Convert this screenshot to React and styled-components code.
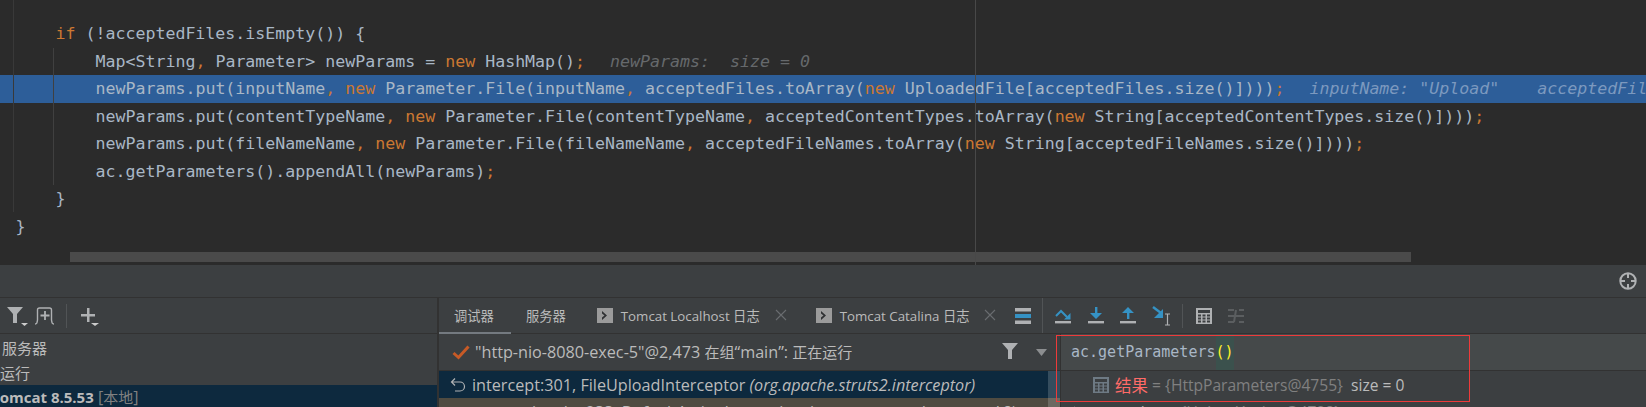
import React from 'react';
import styled, { createGlobalStyle } from 'styled-components';

const Global = createGlobalStyle`
  html, body { margin: 0; padding: 0; background: #3c3f41; overflow: hidden; }
`;

const UI = `"Open Sans", "Noto Sans", "Noto Sans CJK SC", sans-serif`;
const MONO = `"DejaVu Sans Mono", "Liberation Mono", monospace`;

const Page = styled.div`
  width: 1646px; height: 407px; overflow: hidden;
  display: flex; flex-direction: column;
  background: #3c3f41; font-family: ${UI}; color: #bbbbbb;
`;

/* ---------- editor ---------- */
const Editor = styled.div`
  position: relative; height: 265px; flex: none; overflow: hidden;
  background: #2b2b2b; padding-top: 20px; box-sizing: border-box;
`;
const CodeLine = styled.div`
  height: ${p => (p.$current ? 28 : 27.5)}px;
  margin-bottom: ${p => (p.$current ? -0.5 : 0)}px;
  padding-left: ${p => 15.5 + p.$indent * 40}px;
  background: ${p => (p.$current ? '#2d5e99' : 'transparent')};
  font: 16.6px/28.5px ${MONO}; color: #a9b7c6; white-space: pre;
`;
const Kw = styled.span` color: #cc7832; `;
const Hint = styled.span`
  font-style: italic; margin-left: ${p => p.$gap}px;
  color: ${p => (p.$current ? '#7c99bf' : '#66696c')};
`;
const VLine = styled.div`
  position: absolute; left: ${p => p.$x}px; top: ${p => p.$top}px;
  width: 1px; height: ${p => p.$h}px; background: ${p => p.$c};
`;
const HScroll = styled.div`
  position: absolute; left: 70px; top: 252px; width: 1341px; height: 10px; background: #4a4a4a;
`;

/* ---------- tool window ---------- */
const Strip = styled.div`
  height: 33px; flex: none; box-sizing: border-box; border-bottom: 1px solid #323232;
  display: flex; align-items: center; justify-content: flex-end; padding-right: 9px;
`;
const ToolWindow = styled.div` flex: 1; display: flex; min-height: 0; `;
const Left = styled.div`
  width: 437px; flex: none; display: flex; flex-direction: column;
  border-right: 2px solid #323232; overflow: hidden;
`;
const Toolbar = styled.div`
  height: 36px; flex: none; box-sizing: border-box; border-bottom: 1px solid #323232;
  display: flex; align-items: center;
`;
const LeftTools = styled(Toolbar)` padding-left: 6px; gap: 8px; `;
const Sep = styled.div`
  width: 1px; height: 24px; background: #515456; flex: none; margin: 0 ${p => p.$mr || 0}px 0 ${p => p.$ml || 0}px;
`;
const TreeRow = styled.div`
  height: ${p => (p.$selected ? 24 : 24.5)}px; line-height: 24px; font-size: 16.2px; white-space: pre;
  padding-left: ${p => p.$pad}px; flex: none;
  background: ${p => (p.$selected ? '#0d293e' : 'transparent')};
`;
const TreeList = styled.div` padding-top: 2px; `;
const Bold = styled.span` font-weight: 700; font-size: 15px; margin-left: -9px; `;
const Gray = styled.span` color: #808080; `;
const Cjk = styled.span` font-size: 15px; `;

const Right = styled.div` flex: 1; display: flex; flex-direction: column; min-width: 0; `;
const Tabs = styled.div`
  width: 604px; flex: none; align-self: stretch; display: flex; align-items: center;
  box-sizing: border-box; border-right: 1px solid #515456;
`;
const TabBar = styled(Toolbar)``;
const Tab = styled.div`
  height: 100%; box-sizing: border-box; display: flex; align-items: center;
  padding: 0 ${p => p.$pr}px 0 ${p => p.$pl}px; font-size: 13.3px; color: #bbbbbb; gap: 8px;
  border-bottom: 2px solid ${p => (p.$active ? '#747a80' : 'transparent')};
  margin-bottom: -1px; white-space: nowrap;
`;
const Close = styled.span` margin-left: 7px; color: #6a6d70; display: flex; `;
const MenuSlot = styled.div` margin-left: auto; margin-right: 11px; display: flex; `;
const StepTools = styled.div`
  display: flex; align-items: center; padding-left: 12px; gap: 16px; align-self: stretch;
`;
const CalcSlot = styled.div` display: flex; margin-left: -3px; `;

const Content = styled.div` position: relative; flex: 1; display: flex; overflow: hidden; min-height: 0; `;
const Frames = styled.div`
  width: 621px; flex: none; display: flex; flex-direction: column;
  border-right: 1px solid #323232; overflow: hidden;
`;
const ThreadRow = styled.div`
  height: 37px; flex: none; box-sizing: border-box; border-bottom: 1px solid #323232;
  display: flex; align-items: center; padding: 0 13px 0 13px; font-size: 16.2px; white-space: nowrap;
`;
const ThreadText = styled.span` margin-left: 5px; flex: 1; `;
const FrameRow = styled.div`
  height: 27px; flex: none; display: flex; align-items: center; padding-left: ${p => p.$pl}px;
  font-size: 16.2px; white-space: pre;
  background: ${p => (p.$sel ? '#0d293e' : '#4f4b41')};
`;
const FrameText = styled.span` margin-left: 6px; `;
const Italic = styled.span` font-style: italic; `;
const Thumb = styled.div`
  position: absolute; left: 609px; top: 37px; width: 12px; bottom: 0;
  background: rgba(255, 255, 255, 0.17);
`;

const Watch = styled.div` flex: 1; display: flex; flex-direction: column; min-width: 0; `;
const EvalRow = styled.div`
  height: 37px; flex: none; box-sizing: border-box; border-bottom: 1px solid #323232;
  background: #45494a; display: flex; align-items: center; padding-left: 10px;
  font: 15px ${MONO}; color: #a9b7c6;
`;
const Brace = styled.span`
  color: #ffef28; background: #3b514d; height: 100%; display: flex; align-items: center; padding-bottom: 1px; box-sizing: border-box;
`;
const ResultRow = styled.div`
  height: 27px; flex: none; display: flex; align-items: center; padding-left: ${p => p.$pl}px;
  font-size: 15.6px; white-space: pre;
`;
const VarName = styled.span` color: #ff6b68; margin-left: 6px; font-size: 16.5px; `;
const ValGray = styled.span` color: #808080; `;
const Value = styled.span` color: #bbbbbb; `;
const RedBox = styled.div`
  position: absolute; left: 617px; top: 1px; width: 414px; height: 67px; box-sizing: border-box;
  border: 1px solid #ee3a3a; pointer-events: none;
`;

const BLUE = '#3592c4';
const GR = '#afb1b3';

const Filter = ({ caret }) => (
  <svg width="22" height="22" viewBox="0 0 22 22" style={{ flex: 'none' }}>
    <path d="M1 2h16l-6 7v9H7V9z" fill={GR} />
    {caret && <path d="M15 18h7l-3.500 3z" fill="#ccc" />}
  </svg>
);
const PlusBox = () => (
  <svg width="22" height="22" viewBox="0 0 22 22" fill="none" stroke={GR} strokeWidth="1.400" style={{ flex: 'none', margin: '0 2px 0 -2px' }}>
    <path d="M1 19c2 0 2-1 2.500-4V5q0-2 2-2h10q2 0 2 2v10c.5 3 .5 4 2.500 4" />
    <path d="M11 6v9M6.500 10.500h9" strokeWidth="1.800" />
  </svg>
);
const Plus = () => (
  <svg width="22" height="22" viewBox="0 0 22 22" style={{ flex: 'none', marginLeft: 5 }}>
    <path d="M7 3h2.500v6H15v2.400H9.500V17H7v-5.600H1V9h6z" fill={GR} />
    <path d="M11 18h8l-4 3z" fill="#ccc" />
  </svg>
);
const Console = () => (
  <svg width="16" height="15" viewBox="0 0 16 15" style={{ flex: 'none' }}>
    <rect width="16" height="15" fill="#9b9b9b" />
    <path d="M5 3l5 4.500L5 12V9.500l2.500-2L5 5.500z" fill="#2f3133" />
  </svg>
);
const X = () => (
  <svg width="12" height="12" viewBox="0 0 12 12" stroke="currentColor" strokeWidth="1.100"><path d="M1 1l10 10M11 1L1 11" /></svg>
);
const Menu = () => (
  <svg width="16" height="16" viewBox="0 0 16 16">
    <rect y="0" width="16" height="3.500" fill={GR} />
    <rect y="6" width="16" height="4" fill={BLUE} />
    <rect y="12.500" width="16" height="3.500" fill={GR} />
  </svg>
);
const Bar = () => <rect x="0" y="14" width="16" height="2.400" fill={GR} />;
const StepOver = () => (
  <svg width="17" height="18" viewBox="0 0 17 18" fill="none" style={{ flex: 'none' }}>
    <Bar />
    <path d="M1 9l5-5 6 6" stroke={BLUE} strokeWidth="2" />
    <path d="M15.500 6v6.500H9z" fill={BLUE} />
  </svg>
);
const StepInto = () => (
  <svg width="16" height="18" viewBox="0 0 16 18" style={{ flex: 'none' }}>
    <Bar />
    <path d="M7 0h2.400v6H14l-6 6-6-6h5z" fill={BLUE} />
  </svg>
);
const StepOut = () => (
  <svg width="16" height="18" viewBox="0 0 16 18" style={{ flex: 'none' }}>
    <Bar />
    <path d="M7 12V6H2l6-6 6 6H9.400v6z" fill={BLUE} />
  </svg>
);
const RunCursor = () => (
  <svg width="20" height="20" viewBox="0 0 20 20" fill="none" style={{ flex: 'none' }}>
    <path d="M1 1l8 6" stroke={BLUE} strokeWidth="2.400" />
    <path d="M11 3v9H2z" fill={BLUE} />
    <path d="M13 8h5M13 19h5M15.500 8v11" stroke={GR} strokeWidth="1.200" />
  </svg>
);
const Calc = ({ color = '#afb1b3', hole = '#3c3f41', size = 16 }) => (
  <svg width={size} height={size} viewBox="0 0 16 16" style={{ flex: 'none' }}>
    <rect width="16" height="16" fill={color} />
    <rect x="2" y="2" width="12" height="3" fill={hole} />
    {[7, 10, 13].map(y => [2, 6.500, 11].map(x => <rect key={x + '-' + y} x={x} y={y - 0.500} width="3" height="2" fill={hole} />))}
  </svg>
);
const Disabled = () => (
  <svg width="16" height="16" viewBox="0 0 16 16" fill="none" stroke="#5b5e60" strokeWidth="2" style={{ flex: 'none' }}>
    <path d="M0 2h6M0 8h6M0 14h6M16 2h-5M16 8h-8M16 14h-5M8 2l-2 12" />
  </svg>
);
const Check = () => (
  <svg width="18" height="15" viewBox="0 0 18 15" fill="none" style={{ flex: 'none' }}>
    <path d="M1.500 8l5 4.500L16.500 1.500" stroke="#c75a26" strokeWidth="3" />
  </svg>
);
const Back = () => (
  <svg width="16" height="16" viewBox="0 0 16 16" fill="none" stroke="#afb1b3" strokeWidth="1.200" style={{ flex: 'none' }}>
    <path d="M5 1.500L1.500 5 5 8.500M1.500 5H10a4.500 4.500 0 0 1 0 9H5" />
  </svg>
);
const Caret = () => (
  <svg width="11" height="8" viewBox="0 0 11 8" style={{ flex: 'none', marginLeft: 13 }}><path d="M0 1h11L5.500 8z" fill="#8c8e90" /></svg>
);
const Target = () => (
  <svg width="18" height="18" viewBox="0 0 18 18" fill="none" stroke="#afb1b3" style={{ flex: 'none' }}>
    <circle cx="9" cy="9" r="7.700" strokeWidth="2" />
    <path d="M9 1v5M9 12v5M1 9h5M12 9h5" strokeWidth="2" />
  </svg>
);
const Chevron = () => (
  <svg width="8" height="12" viewBox="0 0 8 12" fill="none" stroke="#afb1b3" strokeWidth="1.400" style={{ flex: 'none' }}><path d="M1 1l5 5-5 5" /></svg>
);
const Oo = () => (
  <svg width="16" height="10" viewBox="0 0 16 10" style={{ flex: 'none', margin: '0 7px 0 15px' }}>
    <circle cx="4.500" cy="5" r="4" fill="#9a9da0" /><circle cx="11.500" cy="5" r="4" fill="#9a9da0" />
  </svg>
);

const App = () => (
  <Page>
    <Global />
    <Editor>
      <CodeLine $indent={1}><Kw>if</Kw> (!acceptedFiles.isEmpty()) {'{'}</CodeLine>
      <CodeLine $indent={2}>Map&lt;String<Kw>,</Kw> Parameter&gt; newParams = <Kw>new</Kw> HashMap()<Kw>;</Kw><Hint $gap={25}>newParams:  size = 0</Hint></CodeLine>
      <CodeLine $indent={2} $current>newParams.put(inputName<Kw>,</Kw> <Kw>new</Kw> Parameter.File(inputName<Kw>,</Kw> acceptedFiles.toArray(<Kw>new</Kw> UploadedFile[acceptedFiles.size()])))<Kw>;</Kw><Hint $gap={25} $current>inputName: "Upload"</Hint><Hint $gap={38} $current>acceptedFiles:  size = 0</Hint></CodeLine>
      <CodeLine $indent={2}>newParams.put(contentTypeName<Kw>,</Kw> <Kw>new</Kw> Parameter.File(contentTypeName<Kw>,</Kw> acceptedContentTypes.toArray(<Kw>new</Kw> String[acceptedContentTypes.size()])))<Kw>;</Kw></CodeLine>
      <CodeLine $indent={2}>newParams.put(fileNameName<Kw>,</Kw> <Kw>new</Kw> Parameter.File(fileNameName<Kw>,</Kw> acceptedFileNames.toArray(<Kw>new</Kw> String[acceptedFileNames.size()])))<Kw>;</Kw></CodeLine>
      <CodeLine $indent={2}>ac.getParameters().appendAll(newParams)<Kw>;</Kw></CodeLine>
      <CodeLine $indent={1}>{'}'}</CodeLine>
      <CodeLine $indent={0}>{'}'}</CodeLine>
      <VLine $x={13} $top={0} $h={212} $c="#393939" />
      <VLine $x={53} $top={48} $h={137} $c="#404040" />
      <HScroll />
      <VLine $x={975} $top={0} $h={265} $c="#484848" />
    </Editor>
    <Strip><Target /></Strip>
    <ToolWindow>
      <Left>
        <LeftTools>
          <Filter caret />
          <PlusBox />
          <Sep />
          <Plus />
        </LeftTools>
        <TreeList>
          <TreeRow $pad={2}><Cjk>服务器</Cjk></TreeRow>
          <TreeRow $pad={0}><Cjk>运行</Cjk></TreeRow>
          <TreeRow $pad={0} $selected><Bold>Tomcat 8.5.53</Bold> <Gray>[<Cjk>本地</Cjk>]</Gray></TreeRow>
        </TreeList>
      </Left>
      <Right>
        <TabBar>
          <Tabs>
            <Tab $active $pl={15} $pr={17}>调试器</Tab>
            <Tab $pl={15} $pr={31}>服务器</Tab>
            <Tab $pl={0} $pr={29}><Console />Tomcat Localhost 日志<Close><X /></Close></Tab>
            <Tab $pl={0} $pr={0}><Console />Tomcat Catalina 日志<Close><X /></Close></Tab>
            <MenuSlot><Menu /></MenuSlot>
          </Tabs>
          <StepTools>
            <StepOver />
            <StepInto />
            <StepOut />
            <RunCursor />
            <Sep $ml={-6} />
            <CalcSlot><Calc /></CalcSlot>
            <Disabled />
          </StepTools>
        </TabBar>
        <Content>
          <Frames>
            <ThreadRow>
              <Check />
              <ThreadText>"http-nio-8080-exec-5"@2,473 <Cjk>在组</Cjk>“main”: <Cjk>正在运行</Cjk></ThreadText>
              <Filter />
              <Caret />
            </ThreadRow>
            <FrameRow $sel $pl={11}>
              <Back />
              <FrameText>intercept:301, FileUploadInterceptor <Italic>(org.apache.struts2.interceptor)</Italic></FrameText>
            </FrameRow>
            <FrameRow $pl={87}>
              <FrameText>invoke:233, DefaultActionInvocation <Italic>(com.opensymphony.xwork2)</Italic></FrameText>
            </FrameRow>
          </Frames>
          <Thumb />
          <Watch>
            <EvalRow>ac.getParameters<Brace>()</Brace></EvalRow>
            <ResultRow $pl={32}>
              <Calc color="#6e7a84" hole="#3c3f41" />
              <VarName>结果</VarName><ValGray> = {'{HttpParameters@4755}'}</ValGray><Value>  size = 0</Value>
            </ResultRow>
            <ResultRow $pl={12}>
              <Chevron /><Oo />action = <ValGray>{'{UploadAction@4728}'}</ValGray>
            </ResultRow>
          </Watch>
          <RedBox />
        </Content>
      </Right>
    </ToolWindow>
  </Page>
);

export default App;
